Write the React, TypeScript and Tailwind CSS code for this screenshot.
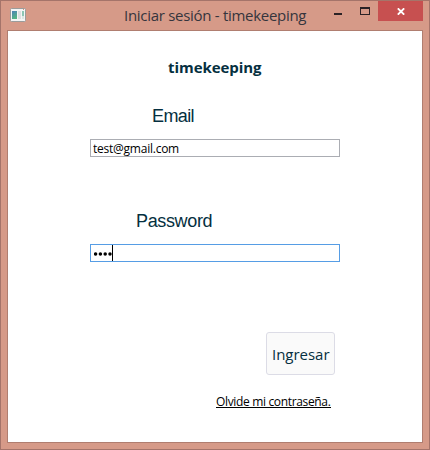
import React from 'react';

function AppIcon() {
  return (
    <svg width="16" height="14" viewBox="0 0 16 14" shapeRendering="crispEdges" aria-hidden="true">
      <defs>
        <linearGradient id="pane" x1="0" y1="0" x2="0.4" y2="1">
          <stop offset="0" stopColor="#4d82b8" />
          <stop offset="1" stopColor="#55b484" />
        </linearGradient>
      </defs>
      <rect x="0.5" y="0.5" width="15" height="13" rx="1" fill="#f4f5f5" stroke="#9a9c9b" shapeRendering="auto" />
      <rect x="2" y="3" width="5" height="8" fill="url(#pane)" />
      <rect x="8" y="3" width="3" height="8" fill="#dddfe0" />
      <rect x="12" y="3" width="2" height="5" fill="#8cc6b4" />
      <rect x="12" y="8" width="2" height="3" fill="#dce5e2" />
      <rect x="13" y="1" width="1" height="1" fill="#d9917e" />
    </svg>
  );
}

function TitleBar() {
  return (
    <header className="flex h-[29px] shrink-0 items-start pl-[9px] pr-1.5">
      <div className="mt-[7px] w-4">
        <AppIcon />
      </div>
      <h1 className="ml-[98px] mt-[3px] w-[183px] whitespace-nowrap font-['Open_Sans','Noto_Sans',sans-serif] text-[15px] leading-[22px] tracking-[-0.29px] text-[#35353d]">
        Iniciar sesión - timekeeping
      </h1>
      <div className="ml-auto flex">
        <button aria-label="Minimizar" className="mr-[18px] mt-3 h-0.5 w-2 bg-[#2b2225]" />
        <button aria-label="Maximizar" className="mr-2 mt-1.5 h-2 w-2.5 border border-t-2 border-[#2b2225]" />
        <button aria-label="Cerrar" className="flex h-5 w-[45px] items-center justify-center bg-[#c75050]">
          <svg width="8" height="7" viewBox="0 0 8 7" aria-hidden="true">
            <path d="M0.8 0.3 7.2 6.7M7.2 0.3 0.8 6.7" stroke="#fff" strokeWidth="1.8" />
          </svg>
        </button>
      </div>
    </header>
  );
}

export default function App() {
  return (
    <div className="flex h-[450px] w-[430px] flex-col border border-[#a5746a] bg-[#d69a88]">
      <TitleBar />
      <main className="mx-1.5 flex h-[413px] flex-col border border-[#b07e70] bg-white">
        <h2 className="mt-[25px] ml-[160px] whitespace-nowrap font-['Open_Sans','Noto_Sans',sans-serif] text-[15px] leading-[22px] font-bold tracking-[-0.06px] text-[#052f40]">
          timekeeping
        </h2>
        <label htmlFor="email" className="mt-[27px] ml-[144px] whitespace-nowrap font-['Liberation_Sans',Arial,sans-serif] text-[18px] leading-[22px] tracking-[-0.6px] text-[#052f40]">
          Email
        </label>
        <input
          id="email"
          readOnly
          value="test@gmail.com"
          className="mt-[12px] ml-[82px] h-[18px] w-[250px] border border-[#abadb3] bg-white pt-px pl-0.5 font-['Open_Sans','Noto_Sans',sans-serif] text-[12px] leading-4 tracking-[-0.24px] text-black outline-none"
        />
        <label htmlFor="password" className="mt-[53px] ml-[128px] whitespace-nowrap font-['Liberation_Sans',Arial,sans-serif] text-[18px] leading-[22px] tracking-[-0.35px] text-[#052f40]">
          Password
        </label>
        <div id="password" className="mt-[12px] ml-[82px] flex h-[18px] w-[250px] items-center border border-[#569de5] bg-white pl-[3px]">
          <svg width="18" height="4" viewBox="0 0 18 4" className="mt-0.5 shrink-0" aria-hidden="true">
            <circle cx="1.6" cy="2" r="1.75" />
            <circle cx="6.4" cy="2" r="1.75" />
            <circle cx="11.2" cy="2" r="1.75" />
            <circle cx="16" cy="2" r="1.75" />
          </svg>
          <span className="h-4 w-px bg-black" />
        </div>
        <button className="mt-[70px] ml-[258px] flex h-[43px] w-[69px] items-center rounded-[3px] border border-[#dcdce6] bg-[#fafafa] pl-[5px] font-['Open_Sans','Noto_Sans',sans-serif] text-[15px] leading-[22px] tracking-[-0.02px] whitespace-nowrap text-[#052f40]">
          Ingresar
        </button>
        <a className="mt-[18px] ml-[208px] h-[15px] w-[115px] border-b border-black pt-px whitespace-nowrap font-['Open_Sans','Noto_Sans',sans-serif] text-[12px] leading-4 tracking-[-0.34px] text-black">
          Olvide mi contraseña.
        </a>
      </main>
    </div>
  );
}
